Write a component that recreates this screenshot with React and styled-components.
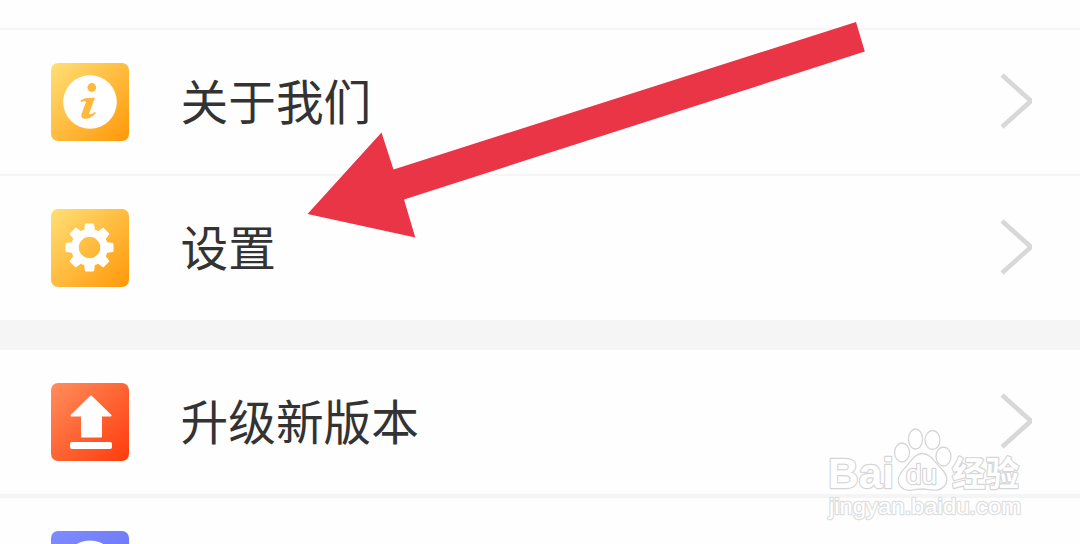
import React from 'react'
import styled, { createGlobalStyle } from 'styled-components'

const GlobalStyle = createGlobalStyle`
  * {
    box-sizing: border-box;
  }
  body {
    margin: 0;
    overflow: hidden;
    background: #fefefe;
  }
`
const Screen = styled.div`
  position: relative;
  display: flex;
  flex-direction: column;
  width: 1080px;
  height: 544px;
  padding-top: 28px;
  overflow: hidden;
  background: #fefefe;
  font-family: "Noto Sans CJK SC", "Liberation Sans", sans-serif;
`
const Divider = styled.div`
  flex: none;
  height: ${({ size }) => size || 2}px;
  background: #f5f5f5;
`
const Row = styled.div`
  flex: none;
  display: flex;
  align-items: center;
  height: 144px;
  padding: 0 48px 0 51px;
`
const Tile = styled.div`
  flex: none;
  width: 78px;
  height: 78px;
  margin-right: 51.5px;
  border-radius: 7px;
  background: linear-gradient(135deg, ${({ from }) => from} 0%, ${({ to }) => to} 100%);
  svg {
    display: block;
  }
`
const Label = styled.span`
  flex: 1;
  margin-top: -5px;
  font-size: 47.7px;
  line-height: 70px;
  color: #333;
`
const Chevron = styled.svg`
  flex: none;
  width: 32px;
  height: 60px;
  margin-top: -2px;
`
const Pointer = styled.svg`
  position: absolute;
  top: 0;
  left: 0;
`
const Watermark = styled.svg`
  position: absolute;
  left: 820px;
  top: 420px;
  text {
    fill: #fff;
    stroke: #d6d6d6;
    stroke-width: 2.4px;
    stroke-linejoin: round;
    paint-order: stroke;
    font-family: "Liberation Sans", "Noto Sans CJK SC", sans-serif;
  }
  .url {
    stroke: #e0e0e0;
  }
  .paw {
    fill: #fff;
    stroke: #d6d6d6;
    stroke-width: 1.3px;
  }
`

const InfoIcon = () => (
  <svg width="78" height="78" viewBox="0 0 78 78">
    <circle cx="39" cy="39" r="26.8" fill="#fff" />
    <g fill="#ffb83c">
      <circle cx="40.8" cy="24.5" r="4.4" />
      <path d="M29.5 37.5C33 34.8 38 34.5 44 34.8L38.2 50.2C37.8 52 39.8 51.8 44 48.8L44.8 50C41 54.5 37 56 33.5 55.7C30.3 55.4 29.8 53 30.8 50.2L34.9 39.2C34.6 37.9 32 38.3 30 39Z" />
    </g>
  </svg>
)

const GearIcon = () => (
  <svg width="78" height="78" viewBox="0 0 78 78">
    <g transform="translate(38.5 38.5)">
      <g fill="#fff">
        {[0, 45, 90, 135, 180, 225, 270, 315].map((angle) => (
          <path
            key={angle}
            transform={`rotate(${angle})`}
            d="M-5.5 -16L-4.6 -23Q-4.4 -24 -3.4 -24H3.4Q4.4 -24 4.6 -23L5.5 -16Z"
          />
        ))}
      </g>
      <circle r="14.6" fill="none" stroke="#fff" strokeWidth="7.8" />
    </g>
  </svg>
)

const UploadIcon = () => (
  <svg width="78" height="78" viewBox="0 0 78 78" fill="#fff" stroke="#fff" strokeLinejoin="round">
    <path strokeWidth="2" d="M40 13.5L59.5 32.5H50V53.5H31V32.5H20.5Z" />
    <rect x="19.5" y="59.5" width="41" height="6" rx="1" strokeWidth="1" />
  </svg>
)

const RoundIcon = () => (
  <svg width="78" height="78" viewBox="0 0 78 78">
    <circle cx="39" cy="36.5" r="27" fill="#fff" />
  </svg>
)

const MenuRow = ({ label, icon, from, to }) => (
  <Row>
    <Tile from={from} to={to}>{icon}</Tile>
    <Label>{label}</Label>
    {label && (
      <Chevron viewBox="0 0 32 60">
        <path d="M2 4L31 30L2 56" fill="none" stroke="#d8d8d8" strokeWidth="4.6" />
      </Chevron>
    )}
  </Row>
)

export default function App() {
  return (
    <Screen>
      <GlobalStyle />
      <Divider />
      <MenuRow label="关于我们" icon={<InfoIcon />} from="#ffe076" to="#ff9708" />
      <Divider />
      <MenuRow label="设置" icon={<GearIcon />} from="#ffe076" to="#ff9708" />
      <Divider size={30} />
      <MenuRow label="升级新版本" icon={<UploadIcon />} from="#ff8e5c" to="#ff3b0c" />
      <Divider size={4} />
      <MenuRow label="" icon={<RoundIcon />} from="#7f8cff" to="#6670f5" />

      <Watermark width="220" height="110" viewBox="0 0 220 110">
        <text x="8" y="68" fontSize="43" fontWeight="bold" textLength="66" lengthAdjust="spacingAndGlyphs">Bai</text>
        <g className="paw">
          <ellipse cx="82" cy="32.5" rx="7.5" ry="9.5" />
          <ellipse cx="95.5" cy="19" rx="7" ry="10" />
          <ellipse cx="112.5" cy="20" rx="7.5" ry="9.5" />
          <ellipse cx="123.5" cy="36.5" rx="7.5" ry="9.5" />
          <path d="M102.5 33.5C111 33.5 115 43 121.5 49C127 54 129 61 124 66.500C118 73 110 69 102.5 69C94 69 87 73 81 67C76 61 79 54 84 49C91 42 94 33.5 102.5 33.5Z" />
        </g>
        <text x="86" y="64" fontSize="27" textLength="31" lengthAdjust="spacingAndGlyphs">du</text>
        <text x="132" y="66" fontSize="34" fontWeight="bold" textLength="67" lengthAdjust="spacingAndGlyphs">经验</text>
        <text className="url" x="9" y="94" fontSize="22" textLength="192" lengthAdjust="spacingAndGlyphs">jingyan.baidu.com</text>
      </Watermark>

      <Pointer width="1080" height="544" viewBox="0 0 1080 544">
        <path d="M307.5 214L381.5 132.5L393.5 169.5L856 22L864.8 51.5L404 199.5L415.3 237.5Z" fill="#e93546" />
      </Pointer>
    </Screen>
  )
}
